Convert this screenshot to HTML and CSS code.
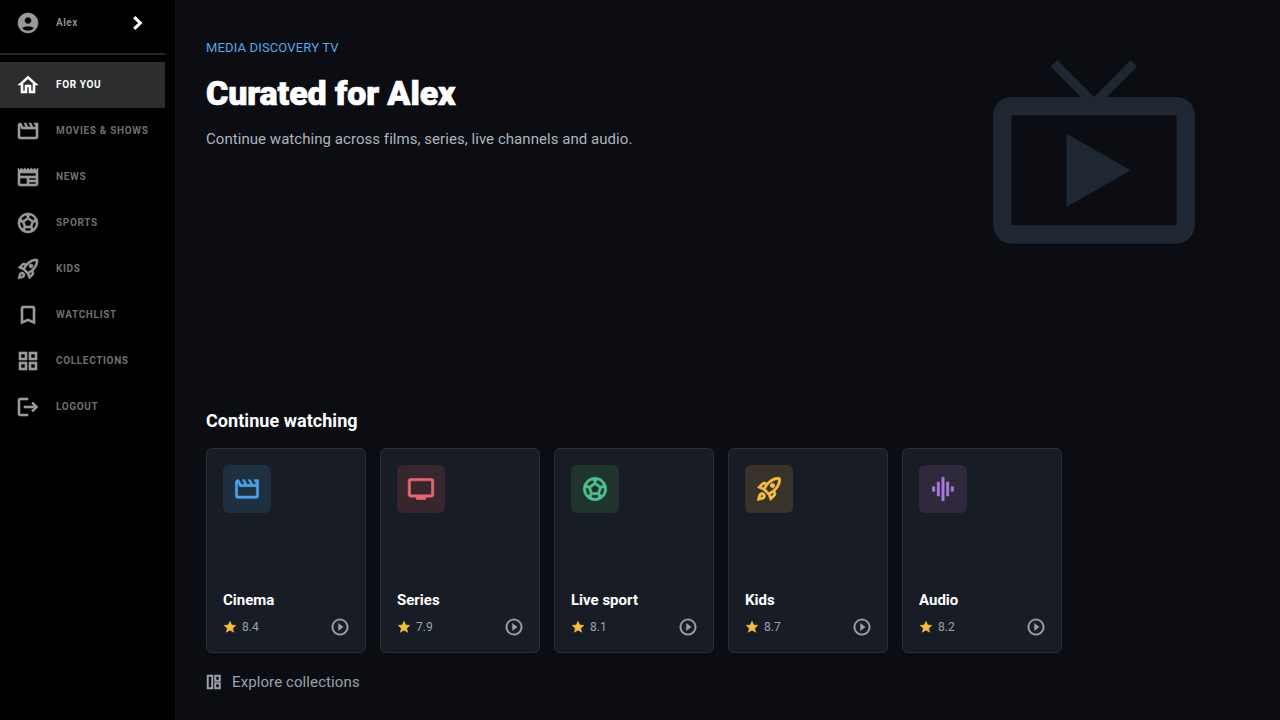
FILE: index.html
```html
<!DOCTYPE html>
<html>
<head>
  <meta charset="utf-8">
  <title>Media Discovery TV</title>
  <link rel="stylesheet" href="styles.css">
</head>
<body>
  <aside class="sidebar">
    <div class="profile">
      <svg class="navIcon" viewBox="0 0 24 24"><path d="M12 2C6.48 2 2 6.48 2 12s4.48 10 10 10 10-4.48 10-10S17.52 2 12 2zm0 4c1.93 0 3.5 1.57 3.5 3.5S13.93 13 12 13s-3.5-1.57-3.5-3.5S10.07 6 12 6zm0 14c-2.03 0-4.43-.82-6.14-2.88C7.55 15.8 9.68 15 12 15s4.45.8 6.14 2.12C16.43 19.18 14.03 20 12 20z"/></svg>
      <span class="profileName">Alex</span>
      <svg class="chevron" viewBox="0 0 24 24"><path d="M9 5.5l6.5 6.5L9 18.5"/></svg>
    </div>
    <nav class="nav">
      <a class="navItem active"><svg class="navIcon" viewBox="0 0 24 24"><path d="M12 5.69l5 4.5V18h-2v-6H9v6H7v-7.81l5-4.5M12 3L2 12h3v8h6v-6h2v6h6v-8h3L12 3z"/></svg><span class="navLabel">For you</span></a>
      <a class="navItem"><svg class="navIcon" viewBox="0 0 24 24"><path d="M4 6.47L5.76 10H20v8H4V6.47M22 4h-4l2 4h-3l-2-4h-2l2 4h-3l-2-4H8l2 4H7L5 4H4c-1.1 0-1.99.9-1.99 2L2 18c0 1.1.9 2 2 2h16c1.1 0 2-.9 2-2V4z"/></svg><span class="navLabel">Movies &amp; Shows</span></a>
      <a class="navItem"><svg class="navIcon" viewBox="0 0 24 24"><path d="M22 3l-1.67 1.67L18.67 3 17 4.67 15.33 3l-1.66 1.67L12 3l-1.67 1.67L8.67 3 7 4.67 5.33 3 3.67 4.67 2 3v16c0 1.1.9 2 2 2h16c1.1 0 2-.9 2-2V3zM11 19H4v-6h7v6zm9 0h-7v-2h7v2zm0-4h-7v-2h7v2zm0-4H4V8h16v3z"/></svg><span class="navLabel">News</span></a>
      <a class="navItem"><svg class="navIcon" viewBox="0 0 24 24"><path d="M12 2C6.48 2 2 6.48 2 12s4.48 10 10 10 10-4.48 10-10S17.52 2 12 2zm1 3.3l1.35-.95c1.82.56 3.37 1.76 4.38 3.34l-.39 1.34-1.35.46L13 6.7V5.3zm-3.35-.95L11 5.3v1.4L7.01 9.49l-1.35-.46-.39-1.34c1.01-1.57 2.56-2.77 4.38-3.34zM7.08 17.11l-1.14.1C4.73 15.81 4 13.99 4 12c0-.12.01-.23.02-.35l1-.73 1.38.48 1.46 4.34-.78 1.37zm7.42 2.48c-.79.26-1.63.41-2.5.41s-1.71-.15-2.5-.41l-.69-1.49.64-1.1h5.11l.64 1.11-.7 1.48zM14.27 15H9.73l-1.35-4.02L12 8.44l3.63 2.54L14.27 15zm3.79 2.21l-1.14-.1-.79-1.37 1.46-4.34 1.39-.47 1 .73c.01.11.02.22.02.34 0 1.99-.73 3.81-1.94 5.21z"/></svg><span class="navLabel">Sports</span></a>
      <a class="navItem"><svg class="navIcon" viewBox="0 0 24 24"><path d="M6 15c-.83 0-1.58.34-2.12.88C2.7 17.06 2 22 2 22s4.94-.7 6.12-1.88c.54-.54.88-1.29.88-2.12 0-1.66-1.34-3-3-3zm.71 3.71c-.28.28-2.17.76-2.17.76s.47-1.88.76-2.17c.17-.19.42-.3.7-.3.55 0 1 .45 1 1 0 .28-.11.53-.29.71zm10.71-5.06c6.36-6.36 4.24-11.31 4.24-11.31S16.71.22 10.35 6.58l-2.49-.5c-.65-.13-1.33.08-1.81.55L2 10.69l5 2.14L11.17 17l2.14 5 4.05-4.05c.47-.47.68-1.15.55-1.81l-.49-2.49zM7.41 10.83l-1.91-.82 1.97-1.97 1.44.29c-.57.83-1.08 1.7-1.5 2.5zm6.58 7.67l-.82-1.91c.8-.42 1.67-.93 2.49-1.5l.29 1.44-1.96 1.97zM16 12.24c-1.32 1.32-3.38 2.4-4.04 2.73l-2.93-2.93c.32-.65 1.4-2.71 2.73-4.04 4.68-4.68 8.23-3.99 8.23-3.99s.69 3.55-3.99 8.23zM15 11c1.1 0 2-.9 2-2s-.9-2-2-2-2 .9-2 2 .9 2 2 2z"/></svg><span class="navLabel">Kids</span></a>
      <a class="navItem"><svg class="navIcon" viewBox="0 0 24 24"><path d="M17 3H7c-1.1 0-1.99.9-1.99 2L5 21l7-3 7 3V5c0-1.1-.9-2-2-2zm0 15l-5-2.18L7 18V5h10v13z"/></svg><span class="navLabel">Watchlist</span></a>
      <a class="navItem"><svg class="navIcon" viewBox="0 0 24 24"><path d="M3 3v8h8V3H3zm6 6H5V5h4v4zm-6 4v8h8v-8H3zm6 6H5v-4h4v4zm4-16v8h8V3h-8zm6 6h-4V5h4v4zm-6 4v8h8v-8h-8zm6 6h-4v-4h4v4z"/></svg><span class="navLabel">Collections</span></a>
      <a class="navItem"><svg class="navIcon" viewBox="0 0 24 24"><path d="M17 7l-1.41 1.41L18.17 11H8v2h10.17l-2.58 2.58L17 17l5-5zM4 5h8V3H4c-1.1 0-2 .9-2 2v14c0 1.1.9 2 2 2h8v-2H4V5z"/></svg><span class="navLabel">Logout</span></a>
    </nav>
  </aside>

  <main class="main">
    <section class="hero">
      <div>
        <div class="eyebrow">MEDIA DISCOVERY TV</div>
        <h1>Curated for Alex</h1>
        <p class="lead">Continue watching across films, series, live channels and audio.</p>
      </div>
      <svg class="heroIcon" viewBox="0 0 24 24"><path d="M21 6h-7.59l3.29-3.29L16 2l-4 4-4-4-.71.71L10.59 6H3c-1.1 0-2 .89-2 2v12c0 1.1.9 2 2 2h18c1.1 0 2-.9 2-2V8c0-1.11-.9-2-2-2zm0 14H3V8h18v12zM9 10v8l7-4z"/></svg>
    </section>

    <h2>Continue watching</h2>
    <div class="cards">
      <div class="card">
        <div class="tile blue"><svg viewBox="0 0 24 24"><path d="M4 6.47L5.76 10H20v8H4V6.47M22 4h-4l2 4h-3l-2-4h-2l2 4h-3l-2-4H8l2 4H7L5 4H4c-1.1 0-1.99.9-1.99 2L2 18c0 1.1.9 2 2 2h16c1.1 0 2-.9 2-2V4z"/></svg></div>
        <div class="cardTitle">Cinema</div>
        <div class="cardMeta">
          <svg class="star" viewBox="0 0 24 24"><path d="M12 17.27L18.18 21l-1.64-7.03L22 9.24l-7.19-.61L12 2 9.19 8.63 2 9.24l5.46 4.73L5.82 21z"/></svg>
          <span class="rating">8.4</span>
          <svg class="play" viewBox="0 0 24 24"><path d="M10 16.5l6-4.5-6-4.5v9zM12 2C6.48 2 2 6.48 2 12s4.48 10 10 10 10-4.48 10-10S17.52 2 12 2zm0 18c-4.41 0-8-3.59-8-8s3.59-8 8-8 8 3.59 8 8-3.59 8-8 8z"/></svg>
        </div>
      </div>
      <div class="card">
        <div class="tile red"><svg viewBox="0 0 24 24"><path d="M21 3H3c-1.1 0-2 .9-2 2v12c0 1.1.9 2 2 2h5v2h8v-2h5c1.1 0 1.99-.9 1.99-2L23 5c0-1.1-.9-2-2-2zm0 14H3V5h18v12z"/></svg></div>
        <div class="cardTitle">Series</div>
        <div class="cardMeta">
          <svg class="star" viewBox="0 0 24 24"><path d="M12 17.27L18.18 21l-1.64-7.03L22 9.24l-7.19-.61L12 2 9.19 8.63 2 9.24l5.46 4.73L5.82 21z"/></svg>
          <span class="rating">7.9</span>
          <svg class="play" viewBox="0 0 24 24"><path d="M10 16.5l6-4.5-6-4.5v9zM12 2C6.48 2 2 6.48 2 12s4.48 10 10 10 10-4.48 10-10S17.52 2 12 2zm0 18c-4.41 0-8-3.59-8-8s3.59-8 8-8 8 3.59 8 8-3.59 8-8 8z"/></svg>
        </div>
      </div>
      <div class="card">
        <div class="tile green"><svg viewBox="0 0 24 24"><path d="M12 2C6.48 2 2 6.48 2 12s4.48 10 10 10 10-4.48 10-10S17.52 2 12 2zm1 3.3l1.35-.95c1.82.56 3.37 1.76 4.38 3.34l-.39 1.34-1.35.46L13 6.7V5.3zm-3.35-.95L11 5.3v1.4L7.01 9.49l-1.35-.46-.39-1.34c1.01-1.57 2.56-2.77 4.38-3.34zM7.08 17.11l-1.14.1C4.73 15.81 4 13.99 4 12c0-.12.01-.23.02-.35l1-.73 1.38.48 1.46 4.34-.78 1.37zm7.42 2.48c-.79.26-1.63.41-2.5.41s-1.71-.15-2.5-.41l-.69-1.49.64-1.1h5.11l.64 1.11-.7 1.48zM14.27 15H9.73l-1.35-4.02L12 8.44l3.63 2.54L14.27 15zm3.79 2.21l-1.14-.1-.79-1.37 1.46-4.34 1.39-.47 1 .73c.01.11.02.22.02.34 0 1.99-.73 3.81-1.94 5.21z"/></svg></div>
        <div class="cardTitle">Live sport</div>
        <div class="cardMeta">
          <svg class="star" viewBox="0 0 24 24"><path d="M12 17.27L18.18 21l-1.64-7.03L22 9.24l-7.19-.61L12 2 9.19 8.63 2 9.24l5.46 4.73L5.82 21z"/></svg>
          <span class="rating">8.1</span>
          <svg class="play" viewBox="0 0 24 24"><path d="M10 16.5l6-4.5-6-4.5v9zM12 2C6.48 2 2 6.48 2 12s4.48 10 10 10 10-4.48 10-10S17.52 2 12 2zm0 18c-4.41 0-8-3.59-8-8s3.59-8 8-8 8 3.59 8 8-3.59 8-8 8z"/></svg>
        </div>
      </div>
      <div class="card">
        <div class="tile amber"><svg viewBox="0 0 24 24"><path d="M6 15c-.83 0-1.58.34-2.12.88C2.7 17.06 2 22 2 22s4.94-.7 6.12-1.88c.54-.54.88-1.29.88-2.12 0-1.66-1.34-3-3-3zm.71 3.71c-.28.28-2.17.76-2.17.76s.47-1.88.76-2.17c.17-.19.42-.3.7-.3.55 0 1 .45 1 1 0 .28-.11.53-.29.71zm10.71-5.06c6.36-6.36 4.24-11.31 4.24-11.31S16.71.22 10.35 6.58l-2.49-.5c-.65-.13-1.33.08-1.81.55L2 10.69l5 2.14L11.17 17l2.14 5 4.05-4.05c.47-.47.68-1.15.55-1.81l-.49-2.49zM7.41 10.83l-1.91-.82 1.97-1.97 1.44.29c-.57.83-1.08 1.7-1.5 2.5zm6.58 7.67l-.82-1.91c.8-.42 1.67-.93 2.49-1.5l.29 1.44-1.96 1.97zM16 12.24c-1.32 1.32-3.38 2.4-4.04 2.73l-2.93-2.93c.32-.65 1.4-2.71 2.73-4.04 4.68-4.68 8.23-3.99 8.23-3.99s.69 3.55-3.99 8.23zM15 11c1.1 0 2-.9 2-2s-.9-2-2-2-2 .9-2 2 .9 2 2 2z"/></svg></div>
        <div class="cardTitle">Kids</div>
        <div class="cardMeta">
          <svg class="star" viewBox="0 0 24 24"><path d="M12 17.27L18.18 21l-1.64-7.03L22 9.24l-7.19-.61L12 2 9.19 8.63 2 9.24l5.46 4.73L5.82 21z"/></svg>
          <span class="rating">8.7</span>
          <svg class="play" viewBox="0 0 24 24"><path d="M10 16.5l6-4.5-6-4.5v9zM12 2C6.48 2 2 6.48 2 12s4.48 10 10 10 10-4.48 10-10S17.52 2 12 2zm0 18c-4.41 0-8-3.59-8-8s3.59-8 8-8 8 3.59 8 8-3.59 8-8 8z"/></svg>
        </div>
      </div>
      <div class="card">
        <div class="tile purple"><svg viewBox="0 0 24 24"><path d="M7 18h2V6H7v12zm4 4h2V2h-2v20zm-8-8h2v-4H3v4zm12 4h2V6h-2v12zm4-8v4h2v-4h-2z"/></svg></div>
        <div class="cardTitle">Audio</div>
        <div class="cardMeta">
          <svg class="star" viewBox="0 0 24 24"><path d="M12 17.27L18.18 21l-1.64-7.03L22 9.24l-7.19-.61L12 2 9.19 8.63 2 9.24l5.46 4.73L5.82 21z"/></svg>
          <span class="rating">8.2</span>
          <svg class="play" viewBox="0 0 24 24"><path d="M10 16.5l6-4.5-6-4.5v9zM12 2C6.48 2 2 6.48 2 12s4.48 10 10 10 10-4.48 10-10S17.52 2 12 2zm0 18c-4.41 0-8-3.59-8-8s3.59-8 8-8 8 3.59 8 8-3.59 8-8 8z"/></svg>
        </div>
      </div>
    </div>

    <a class="explore">
      <svg viewBox="0 0 16 16"><path d="M1.75 1.75h4.5v12.5h-4.5zM9.25 1.75h4.5v5h-4.5zM9.25 9.25h4.5v5h-4.5z"/></svg>
      Explore collections
    </a>
  </main>
</body>
</html>
```

FILE: styles.css
```css
* {box-sizing:border-box;}
html, body {height:100%;}
body {margin:0;display:flex;background-color:#0b0d12;color:#fff;font-family:Roboto,"Liberation Sans",sans-serif;overflow:hidden;}

/* sidebar */
.sidebar {width:175px;flex:none;height:100%;background-color:#000;padding-right:10px;}
.profile {display:flex;align-items:center;height:55px;padding:0 16px 7px 16px;border-bottom:2px solid #25252d;}
.profileName {margin-left:16px;margin-top:-1px;font-size:10px;font-weight:700;letter-spacing:.5px;color:#8a8a8a;}
.chevron {width:22px;height:22px;margin-left:auto;margin-right:1px;fill:none;stroke:#fff;stroke-width:3.4;}
.nav {margin-top:7px;}
.navItem {display:flex;align-items:center;gap:16px;height:46px;padding-left:16px;font-size:10px;font-weight:700;letter-spacing:.65px;text-transform:uppercase;color:#6e6e6e;}
.navLabel {margin-top:-1px;}
.navItem.active {background-color:#2d2d2d;color:#fff;}
.navIcon {width:24px;height:24px;flex:none;fill:#9a9a9a;stroke:#9a9a9a;stroke-width:.6;}
.active .navIcon {fill:#fff;stroke:#fff;}

/* main column */
.main {flex:1;min-width:0;padding:40px 76px 0 31px;}
.hero {display:flex;justify-content:space-between;align-items:flex-start;height:366px;}
.eyebrow {font-size:13px;line-height:15px;letter-spacing:.15px;color:#58a6e8;}
h1 {margin:16px 0 0 0;font-size:34px;line-height:44px;font-weight:900;letter-spacing:-.1px;-webkit-text-stroke:.7px #fff;}
.lead {margin:13px 0 0 0;font-size:15px;line-height:22px;letter-spacing:.05px;color:#aeb4be;}
.heroIcon {width:220px;height:220px;flex:none;margin-top:1.5px;fill:#1f2733;}
h2 {margin:0;font-size:18px;line-height:30px;font-weight:700;letter-spacing:.05px;}

/* cards */
.cards {display:flex;gap:14px;margin-top:12px;}
.card {width:160px;height:205px;display:flex;flex-direction:column;padding:16px 16px 15px 16px;background-color:#181d25;border:1px solid #2a303a;border-radius:6px;}
.tile {width:48px;height:48px;display:flex;align-items:center;justify-content:center;border-radius:6px;}
.tile svg {width:28px;height:28px;fill:currentColor;stroke:currentColor;stroke-width:.5;}
.tile.blue {background-color:#1e2f40;color:#4ea1e6;}
.tile.red {background-color:#37262e;color:#e8686d;}
.tile.green {background-color:#1f332f;color:#4fbf8f;}
.tile.amber {background-color:#38322a;color:#f5bd43;}
.tile.purple {background-color:#2e2a3c;color:#a97be0;}
.cardTitle {margin-top:auto;font-size:15px;line-height:20px;font-weight:700;}
.cardMeta {display:flex;align-items:center;height:20px;margin-top:7px;}
.star {width:14px;height:14px;fill:#f5bd43;stroke:#f5bd43;stroke-width:1;stroke-linejoin:round;}
.rating {margin-left:5px;font-size:12px;color:#9aa1ac;}
.play {width:20px;height:20px;margin-left:auto;margin-right:-1px;fill:#9aa1ac;stroke:#9aa1ac;stroke-width:.3;}

/* bottom link */
.explore {display:flex;align-items:center;gap:10px;margin-top:19px;font-size:15px;line-height:20px;letter-spacing:.1px;color:#9aa1ac;}
.explore svg {width:16px;height:16px;fill:none;stroke:#9aa1ac;stroke-width:2;}
```
